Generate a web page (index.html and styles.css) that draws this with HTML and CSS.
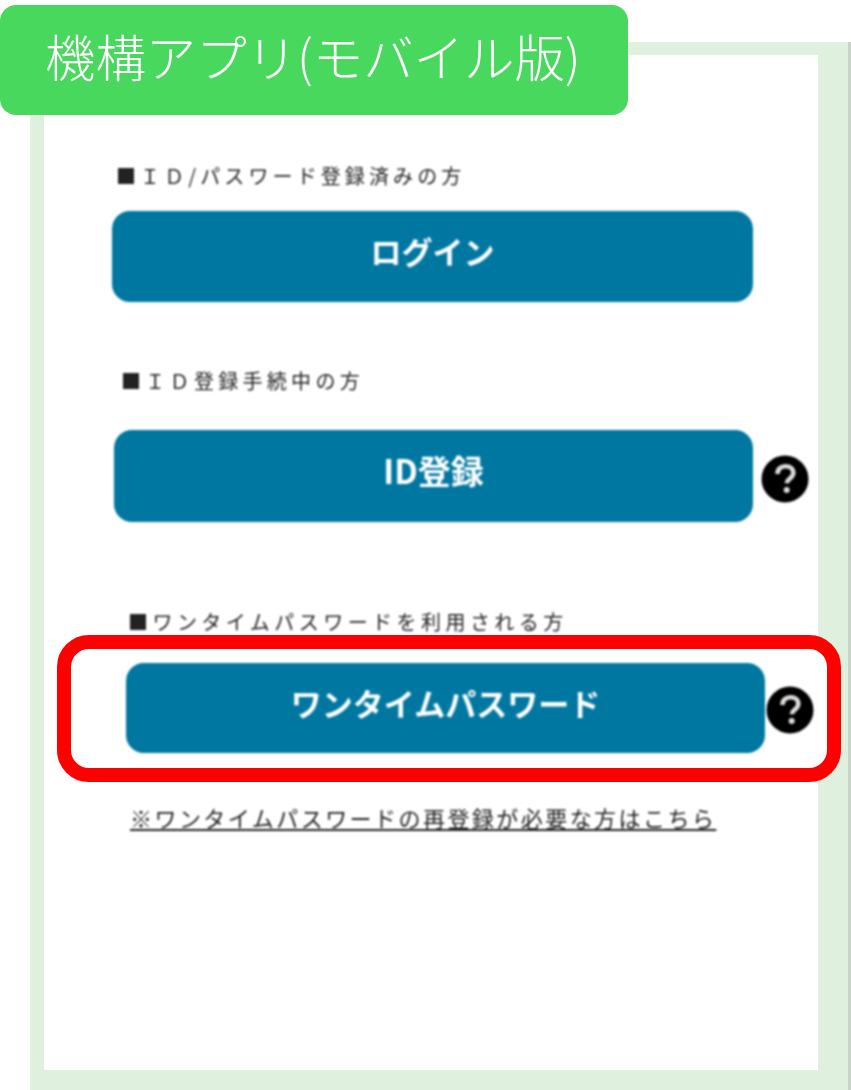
FILE: index.html
```html
<!DOCTYPE html>
<html lang="ja">
<head>
<meta charset="utf-8">
<title>機構アプリ(モバイル版)</title>
<link rel="stylesheet" href="styles.css">
</head>
<body>
<div class="stage">
  <div class="tab">機構アプリ(モバイル版)</div>
  <div class="panel">
    <div class="sheet">
      <section class="group group-login">
        <p class="label label-login">■ＩＤ/パスワード登録済みの方</p>
        <div class="row">
          <a class="btn btn-login">ログイン</a>
        </div>
      </section>
      <section class="group group-id">
        <p class="label label-id">■ＩＤ登録手続中の方</p>
        <div class="row">
          <a class="btn btn-id">ID登録</a>
          <span class="help help-id">
            <svg viewBox="0 0 48 48" width="48" height="48"><circle cx="24" cy="24" r="23.5" fill="#000"/><path d="M16.5 19c0-5 3.4-7.8 8-7.8 4.5 0 7.8 2.6 7.8 6.6 0 5.6-6.3 5.600-6.300 10.400" fill="none" stroke="#ddd" stroke-width="4.600"/><circle cx="25.700" cy="35" r="3" fill="#ddd"/></svg>
          </span>
        </div>
      </section>
      <p class="label label-otp">■ワンタイムパスワードを利用される方</p>
      <div class="highlight">
        <div class="row">
          <a class="btn btn-otp">ワンタイムパスワード</a>
          <span class="help help-otp">
            <svg viewBox="0 0 48 48" width="48" height="48"><circle cx="24" cy="24" r="23.500" fill="#000"/><path d="M16.500 19c0-5 3.400-7.800 8-7.800 4.500 0 7.800 2.600 7.800 6.600 0 5.600-6.300 5.600-6.300 10.400" fill="none" stroke="#ddd" stroke-width="4.600"/><circle cx="25.700" cy="35" r="3" fill="#ddd"/></svg>
          </span>
        </div>
      </div>
      <a class="relink">※ワンタイムパスワードの再登録が必要な方はこちら</a>
    </div>
  </div>
</div>
</body>
</html>
```
FILE: styles.css
```css
* { box-sizing: border-box; }
html, body { margin: 0; padding: 0; background: #fff; }
body {
  width: 851px;
  height: 1090px;
  overflow: hidden;
  font-family: "Noto Sans CJK JP", "Liberation Sans", sans-serif;
}
.stage {
  position: relative;
  width: 851px;
  height: 1090px;
  padding: 42px 0 0 30px;
}
.tab {
  position: absolute;
  left: 0;
  top: 5px;
  z-index: 2;
  width: 628px;
  height: 110px;
  padding: 0 0 10px 45px;
  display: flex;
  align-items: center;
  background: #49d85e;
  border-radius: 16px;
  color: #fff;
  font-size: 50.4px;
  font-weight: 300;
  white-space: nowrap;
}
.panel {
  display: flex;
  height: 1048px;
  padding: 13px 33px 20px 14px;
  background: #dff0df;
  box-shadow: inset -3px 0 0 #c9d4c9;
}
.sheet {
  flex: 1;
  min-width: 0;
  display: flex;
  flex-direction: column;
  background: #fff;
  padding-top: 109px;
}
.group { display: flex; flex-direction: column; }
.label {
  margin: 0;
  height: 24px;
  line-height: 24px;
  font-size: 20px;
  color: #222;
  white-space: nowrap;
  filter: blur(1px);
}
.label-login { margin-left: 72px; letter-spacing: 4.100px; }
.label-id { margin-left: 77px; letter-spacing: 4.300px; }
.label-otp { margin-left: 84px; letter-spacing: 4.450px; margin-top: 88px; }
.row { display: flex; align-items: center; }
.btn {
  display: flex;
  align-items: center;
  justify-content: center;
  background: #0077a0;
  border-radius: 18px;
  color: #fff;
  font-weight: 700;
  padding-bottom: 12px;
  filter: blur(0.8px);
}
.group-login .row { margin: 23px 0 0 68px; }
.btn-login { width: 641px; height: 91px; font-size: 31px; }
.group-id { margin-top: 67px; }
.group-id .row { margin: 37px 0 0 70px; }
.btn-id { width: 639px; height: 92px; font-size: 33px; }
.help { display: flex; margin-left: 8px; filter: blur(0.9px); }
.help-id { margin-top: 6px; }
.help-otp { margin: 4px 0 0 1px; }
.highlight {
  width: 784px;
  height: 147px;
  margin: 1px 0 0 13px;
  padding: 14px 0 0 55px;
  border: 14px solid #f00;
  border-radius: 32px;
  background: #fff;
}
.btn-otp { width: 639px; height: 90px; font-size: 31px; }
.relink {
  align-self: flex-start;
  margin: 23px 0 0 86px;
  height: 26px;
  line-height: 24px;
  font-size: 22px;
  letter-spacing: 2.450px;
  color: #222;
  white-space: nowrap;
  text-decoration: underline;
  filter: blur(0.9px);
}
```
